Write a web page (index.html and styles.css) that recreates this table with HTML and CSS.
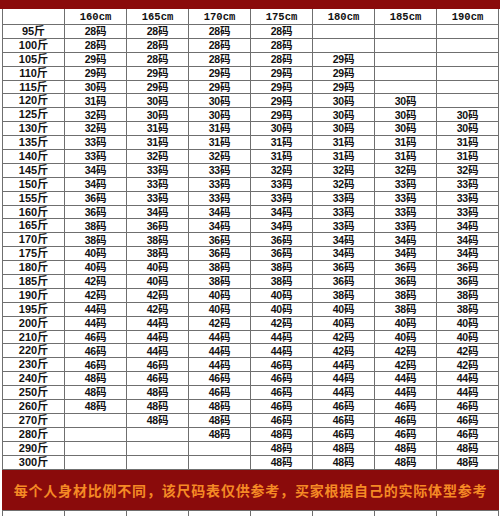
FILE: index.html
```html
<!DOCTYPE html>
<html lang="zh">
<head>
<meta charset="utf-8">
<title>尺码表</title>
<link rel="stylesheet" href="styles.css">
</head>
<body>
<div class="page">
  <div class="topbar"></div>
  <div class="sheet">
    <div class="cell head"></div><div class="cell head">160cm</div><div class="cell head">165cm</div><div class="cell head">170cm</div><div class="cell head">175cm</div><div class="cell head">180cm</div><div class="cell head">185cm</div><div class="cell head">190cm</div>
    <div class="cell">95斤</div><div class="cell val">28码</div><div class="cell val">28码</div><div class="cell val">28码</div><div class="cell val">28码</div><div class="cell val"></div><div class="cell val"></div><div class="cell val"></div>
    <div class="cell">100斤</div><div class="cell val">28码</div><div class="cell val">28码</div><div class="cell val">28码</div><div class="cell val">28码</div><div class="cell val"></div><div class="cell val"></div><div class="cell val"></div>
    <div class="cell">105斤</div><div class="cell val">29码</div><div class="cell val">28码</div><div class="cell val">28码</div><div class="cell val">28码</div><div class="cell val">29码</div><div class="cell val"></div><div class="cell val"></div>
    <div class="cell">110斤</div><div class="cell val">29码</div><div class="cell val">29码</div><div class="cell val">29码</div><div class="cell val">29码</div><div class="cell val">29码</div><div class="cell val"></div><div class="cell val"></div>
    <div class="cell">115斤</div><div class="cell val">30码</div><div class="cell val">29码</div><div class="cell val">29码</div><div class="cell val">29码</div><div class="cell val">29码</div><div class="cell val"></div><div class="cell val"></div>
    <div class="cell">120斤</div><div class="cell val">31码</div><div class="cell val">30码</div><div class="cell val">30码</div><div class="cell val">29码</div><div class="cell val">30码</div><div class="cell val">30码</div><div class="cell val"></div>
    <div class="cell">125斤</div><div class="cell val">32码</div><div class="cell val">30码</div><div class="cell val">30码</div><div class="cell val">29码</div><div class="cell val">30码</div><div class="cell val">30码</div><div class="cell val">30码</div>
    <div class="cell">130斤</div><div class="cell val">32码</div><div class="cell val">31码</div><div class="cell val">31码</div><div class="cell val">30码</div><div class="cell val">30码</div><div class="cell val">30码</div><div class="cell val">30码</div>
    <div class="cell">135斤</div><div class="cell val">33码</div><div class="cell val">31码</div><div class="cell val">31码</div><div class="cell val">31码</div><div class="cell val">31码</div><div class="cell val">31码</div><div class="cell val">31码</div>
    <div class="cell">140斤</div><div class="cell val">33码</div><div class="cell val">32码</div><div class="cell val">32码</div><div class="cell val">31码</div><div class="cell val">31码</div><div class="cell val">31码</div><div class="cell val">31码</div>
    <div class="cell">145斤</div><div class="cell val">34码</div><div class="cell val">33码</div><div class="cell val">33码</div><div class="cell val">32码</div><div class="cell val">32码</div><div class="cell val">32码</div><div class="cell val">32码</div>
    <div class="cell">150斤</div><div class="cell val">34码</div><div class="cell val">33码</div><div class="cell val">33码</div><div class="cell val">33码</div><div class="cell val">32码</div><div class="cell val">33码</div><div class="cell val">33码</div>
    <div class="cell">155斤</div><div class="cell val">36码</div><div class="cell val">33码</div><div class="cell val">33码</div><div class="cell val">33码</div><div class="cell val">33码</div><div class="cell val">33码</div><div class="cell val">33码</div>
    <div class="cell">160斤</div><div class="cell val">36码</div><div class="cell val">34码</div><div class="cell val">34码</div><div class="cell val">34码</div><div class="cell val">33码</div><div class="cell val">33码</div><div class="cell val">33码</div>
    <div class="cell">165斤</div><div class="cell val">38码</div><div class="cell val">36码</div><div class="cell val">34码</div><div class="cell val">34码</div><div class="cell val">33码</div><div class="cell val">33码</div><div class="cell val">34码</div>
    <div class="cell">170斤</div><div class="cell val">38码</div><div class="cell val">38码</div><div class="cell val">36码</div><div class="cell val">36码</div><div class="cell val">34码</div><div class="cell val">34码</div><div class="cell val">34码</div>
    <div class="cell">175斤</div><div class="cell val">40码</div><div class="cell val">38码</div><div class="cell val">36码</div><div class="cell val">36码</div><div class="cell val">34码</div><div class="cell val">34码</div><div class="cell val">34码</div>
    <div class="cell">180斤</div><div class="cell val">40码</div><div class="cell val">40码</div><div class="cell val">38码</div><div class="cell val">38码</div><div class="cell val">36码</div><div class="cell val">36码</div><div class="cell val">36码</div>
    <div class="cell">185斤</div><div class="cell val">42码</div><div class="cell val">40码</div><div class="cell val">38码</div><div class="cell val">38码</div><div class="cell val">36码</div><div class="cell val">36码</div><div class="cell val">36码</div>
    <div class="cell">190斤</div><div class="cell val">42码</div><div class="cell val">42码</div><div class="cell val">40码</div><div class="cell val">40码</div><div class="cell val">38码</div><div class="cell val">38码</div><div class="cell val">38码</div>
    <div class="cell">195斤</div><div class="cell val">44码</div><div class="cell val">42码</div><div class="cell val">40码</div><div class="cell val">40码</div><div class="cell val">40码</div><div class="cell val">38码</div><div class="cell val">38码</div>
    <div class="cell">200斤</div><div class="cell val">44码</div><div class="cell val">44码</div><div class="cell val">42码</div><div class="cell val">42码</div><div class="cell val">40码</div><div class="cell val">40码</div><div class="cell val">40码</div>
    <div class="cell">210斤</div><div class="cell val">46码</div><div class="cell val">44码</div><div class="cell val">44码</div><div class="cell val">44码</div><div class="cell val">42码</div><div class="cell val">40码</div><div class="cell val">40码</div>
    <div class="cell">220斤</div><div class="cell val">46码</div><div class="cell val">44码</div><div class="cell val">44码</div><div class="cell val">44码</div><div class="cell val">42码</div><div class="cell val">42码</div><div class="cell val">42码</div>
    <div class="cell">230斤</div><div class="cell val">46码</div><div class="cell val">46码</div><div class="cell val">44码</div><div class="cell val">46码</div><div class="cell val">44码</div><div class="cell val">42码</div><div class="cell val">42码</div>
    <div class="cell">240斤</div><div class="cell val">48码</div><div class="cell val">46码</div><div class="cell val">46码</div><div class="cell val">46码</div><div class="cell val">44码</div><div class="cell val">44码</div><div class="cell val">44码</div>
    <div class="cell">250斤</div><div class="cell val">48码</div><div class="cell val">48码</div><div class="cell val">46码</div><div class="cell val">46码</div><div class="cell val">44码</div><div class="cell val">44码</div><div class="cell val">44码</div>
    <div class="cell">260斤</div><div class="cell val">48码</div><div class="cell val">48码</div><div class="cell val">48码</div><div class="cell val">46码</div><div class="cell val">46码</div><div class="cell val">46码</div><div class="cell val">46码</div>
    <div class="cell">270斤</div><div class="cell val"></div><div class="cell val">48码</div><div class="cell val">48码</div><div class="cell val">46码</div><div class="cell val">46码</div><div class="cell val">46码</div><div class="cell val">46码</div>
    <div class="cell">280斤</div><div class="cell val"></div><div class="cell val"></div><div class="cell val">48码</div><div class="cell val">48码</div><div class="cell val">46码</div><div class="cell val">46码</div><div class="cell val">46码</div>
    <div class="cell">290斤</div><div class="cell val"></div><div class="cell val"></div><div class="cell val"></div><div class="cell val">48码</div><div class="cell val">48码</div><div class="cell val">48码</div><div class="cell val">48码</div>
    <div class="cell">300斤</div><div class="cell val"></div><div class="cell val"></div><div class="cell val"></div><div class="cell val">48码</div><div class="cell val">48码</div><div class="cell val">48码</div><div class="cell val">48码</div>
    <div class="footer">每个人身材比例不同，该尺码表仅供参考，买家根据自己的实际体型参考</div>
    <div class="cell tail"></div><div class="cell tail"></div><div class="cell tail"></div><div class="cell tail"></div><div class="cell tail"></div><div class="cell tail"></div><div class="cell tail"></div><div class="cell tail"></div>
  </div>
</div>
</body>
</html>
```
FILE: styles.css
```css
html, body {
  margin: 0;
  padding: 0;
  background: #ffffff;
}
.page {
  width: 500px;
  height: 516px;
  overflow: hidden;
  background: #ffffff;
}
.topbar {
  height: 9px;
  background: #8a0b0b;
}
.sheet {
  display: grid;
  grid-template-columns: repeat(8, 61px);
  grid-template-rows: 15px repeat(32, 12.9px) 40px 12px;
  gap: 1px;
  background: #6f6f6f;
  border: 1px solid #6f6f6f;
  border-top: none;
  margin-left: 2px;
  width: max-content;
}
.cell {
  background: #ffffff;
  display: flex;
  align-items: center;
  justify-content: center;
  font-family: "Liberation Sans", "Noto Sans CJK SC", sans-serif;
  font-weight: bold;
  font-size: 11px;
  color: #111111;
  line-height: 1;
  white-space: nowrap;
}
.head {
  font-family: "Liberation Mono", "Noto Sans CJK SC", monospace;
  font-size: 10.5px;
  padding-top: 1px;
}
.val {
  font-size: 10.5px;
  letter-spacing: -0.2px;
}
.footer {
  grid-column: 1 / -1;
  background: #8a0b0b;
  margin: 0 -1px;
  display: flex;
  align-items: center;
  justify-content: center;
  font-family: "Noto Sans CJK SC", sans-serif;
  font-weight: bold;
  font-size: 14px;
  letter-spacing: 0.8px;
  color: #f58a25;
  white-space: nowrap;
}
.tail {
  background: #ffffff;
}
```
